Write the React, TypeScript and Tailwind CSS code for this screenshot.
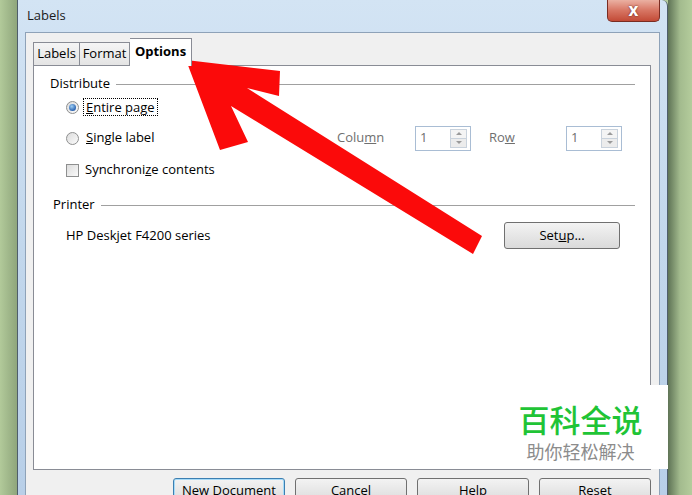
import React from "react";

function Radio({checked}: {checked?: boolean}) {
	return (
		<span className="w-[13px] h-[13px] rounded-full border border-[#8e8f8f] bg-gradient-to-br from-[#dcdcdc] to-[#fbfbfb] flex items-center justify-center shrink-0">
			{checked && <span className="w-[7px] h-[7px] rounded-full bg-[radial-gradient(circle_at_40%_35%,#9fd0f5,#2a62b0_70%)]"/>}
		</span>
	);
}

function Spin({disabled}: {disabled?: boolean}) {
	return (
		<div className="w-[56px] h-[25px] border border-[#a9bdd4] bg-white flex items-center shrink-0">
			<span className={"flex-1 pl-[4px] " + (disabled ? "text-[#6f6f6f]" : "")}>1</span>
			<div className="w-[17px] h-[19px] mr-[3px] flex flex-col border border-[#c9d2dc]">
				<div className="flex-1 flex items-center justify-center bg-[#f4f4f4] border-b border-[#c9d2dc]">
					<span className="w-0 h-0 border-l-[3px] border-r-[3px] border-b-[3px] border-l-transparent border-r-transparent border-b-[#9a9a9a]"/>
				</div>
				<div className="flex-1 flex items-center justify-center bg-[#ececec]">
					<span className="w-0 h-0 border-l-[3px] border-r-[3px] border-t-[3px] border-l-transparent border-r-transparent border-t-[#9a9a9a]"/>
				</div>
			</div>
		</div>
	);
}

function GroupHeader({title, pl}: {title: string; pl: string}) {
	return (
		<div className={"flex items-center h-[20px] pr-[15px] " + pl}>
			<span>{title}</span>
			<span className="flex-1 h-px bg-[#a0a0a0] ml-[6px] mt-[1px]"/>
		</div>
	);
}

function DialogButton({label, primary}: {label: React.ReactNode; primary?: boolean}) {
	return (
		<button className={"w-[112px] h-[24px] rounded-[3px] border bg-gradient-to-b from-[#f3f3f3] to-[#dcdcdc] text-[13px] pt-[2px] " + (primary ? "border-[#3c7fb1] shadow-[inset_0_0_0_1px_#a6dbf8]" : "border-[#707070]")}>
			{label}
		</button>
	);
}

function Arrow() {
	return (
		<svg className="absolute left-0 top-0 pointer-events-none" width="692" height="495" viewBox="0 0 692 495">
			<polygon
				fill="#fb0a0a"
				points="186,60 280,71 279,96 247,88 482,236 473,254 231,106 248,142 220,150"
			/>
		</svg>
	);
}

export default function App() {
	return (
		<div className="relative w-[692px] h-[495px] overflow-hidden bg-[#b4cc9c] font-['Open_Sans',sans-serif] text-[13px] text-black">
			<div className="flex h-full">
				<div className="w-[17px] shrink-0 bg-gradient-to-r from-[#b2ca9a] to-[#8fa67c]"/>
				{/* window */}
				<div className="w-[651px] shrink-0 flex flex-col border-l border-r border-[#4f5e6b] rounded-tr-[6px] bg-gradient-to-b from-[#d3e4f4] via-[#c2d7ec] to-[#b8cfe8]">
					<div className="h-[32px] flex items-start shrink-0">
						<span className="pl-[9px] pt-[6px] text-[13px] text-[#1b1b1b]">Labels</span>
						<div className="ml-auto mr-[7px] w-[53px] h-[22px] rounded-b-[5px] border border-t-0 border-[#7a2c22] bg-gradient-to-b from-[#eab0a2] via-[#d77563] to-[#c24a36] flex items-center justify-center">
							<span className="text-white font-bold text-[17px] leading-none -mt-[3px] [text-shadow:0_0_2px_#5a1a10]">x</span>
						</div>
					</div>
					{/* client area */}
					<div className="flex-1 mx-[7px] border border-b-0 border-[#8ea2b8] bg-[#f0f0f0] flex flex-col">
						<div className="h-[32px] flex items-end pl-[7px] shrink-0">
							<div className="w-[47px] h-[23px] border border-b-0 border-[#898c95] bg-gradient-to-b from-[#f5f5f5] to-[#e4e4e4] flex items-center justify-center">Labels</div>
							<div className="w-[50px] h-[23px] border border-b-0 border-l-0 border-[#898c95] bg-gradient-to-b from-[#f5f5f5] to-[#e4e4e4] flex items-center justify-center">Format</div>
							<div className="w-[62px] h-[28px] -mb-px relative z-10 border border-b-0 border-l-0 border-[#898c95] bg-white flex items-start justify-center pt-[3px] font-bold">Options</div>
						</div>
						<div className="ml-[7px] w-[618px] h-[405px] shrink-0 border border-[#898c95] bg-white flex flex-col">
							<div className="h-[8px]"/>
							<GroupHeader title="Distribute" pl="pl-[16px]"/>
							<div className="h-[26px] flex items-center pl-[32px]">
								<Radio checked/>
								<span className="ml-[4px] px-[2px] border border-dotted border-black leading-[16px]"><span className="underline">E</span>ntire page</span>
							</div>
							<div className="h-[36px] flex items-center pl-[32px]">
								<div className="w-[271px] flex items-center">
									<Radio/>
									<span className="ml-[7px]"><span className="underline">S</span>ingle label</span>
								</div>
								<span className="w-[78px] text-[#6f6f6f]">Colu<span className="underline">m</span>n</span>
								<Spin disabled/>
								<span className="w-[95px] pl-[18px] text-[#6f6f6f]">Ro<span className="underline">w</span></span>
								<Spin disabled/>
							</div>
							<div className="h-[28px] flex items-center pl-[32px]">
								<span className="w-[13px] h-[13px] border border-[#8e8f8f] bg-gradient-to-br from-[#dcdcdc] to-[#fafafa] shrink-0"/>
								<span className="ml-[6px]">Synchroni<span className="underline">z</span>e contents</span>
							</div>
							<div className="h-[11px]"/>
							<GroupHeader title="Printer" pl="pl-[19px]"/>
							<div className="h-[27px] mt-[7px] flex items-center justify-between pl-[32px] pr-[30px]">
								<span>HP Deskjet F4200 series</span>
								<button className="w-[116px] h-[27px] rounded-[3px] border border-[#707070] bg-gradient-to-b from-[#f3f3f3] to-[#dadada] text-[13px]">Set<span className="underline">u</span>p...</button>
							</div>
						</div>
						<div className="mt-[8px] flex justify-end gap-[10px] pr-[8px]">
							<DialogButton label="New Document" primary/>
							<DialogButton label="Cancel"/>
							<DialogButton label="Help"/>
							<DialogButton label="Reset"/>
						</div>
					</div>
				</div>
				<div className="flex-1 bg-gradient-to-r from-[#5f7456] via-[#a3bb8e] to-[#b4cc9c]"/>
			</div>
			<Arrow/>
			{/* watermark */}
			<div className="absolute left-[493px] top-[385px] w-[175px] h-[84px] bg-white flex flex-col items-center pt-[17px] font-['Noto_Sans_CJK_SC',sans-serif]">
				<span className="text-[31px] leading-[34px] text-[#1fc436] font-medium">百科全说</span>
				<span className="text-[18px] leading-[20px] text-[#8c8c8c] mt-[5px]">助你轻松解决</span>
			</div>
		</div>
	);
}
